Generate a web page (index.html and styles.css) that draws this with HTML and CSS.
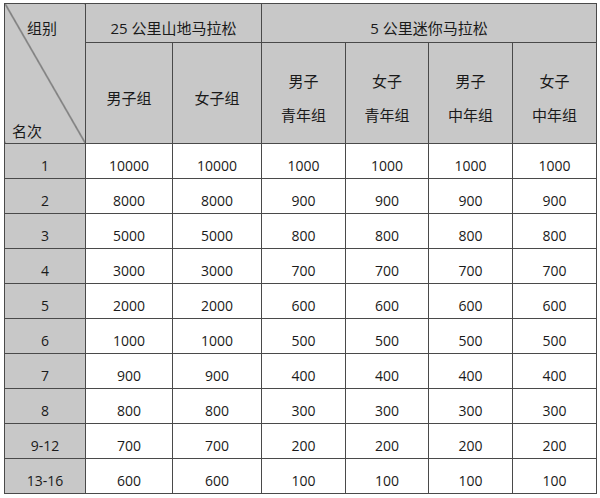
FILE: index.html
```html
<!DOCTYPE html>
<html lang="zh">
<head>
<meta charset="utf-8">
<link rel="stylesheet" href="styles.css">
</head>
<body>
<table class="prize">
  <colgroup>
    <col class="c0"><col class="c1"><col class="c2"><col class="c3"><col class="c4"><col class="c5"><col class="c6">
  </colgroup>
  <thead>
    <tr class="h1">
      <th class="corner" rowspan="2">
        <div class="corner-in">
          <span class="cg">组别</span>
          <span class="mc">名次</span>
        </div>
      </th>
      <th colspan="2">25 公里山地马拉松</th>
      <th colspan="4">5 公里迷你马拉松</th>
    </tr>
    <tr class="h2">
      <th>男子组</th>
      <th>女子组</th>
      <th>男子<br>青年组</th>
      <th>女子<br>青年组</th>
      <th>男子<br>中年组</th>
      <th>女子<br>中年组</th>
    </tr>
  </thead>
  <tbody>
    <tr><th>1</th><td>10000</td><td>10000</td><td>1000</td><td>1000</td><td>1000</td><td>1000</td></tr>
    <tr><th>2</th><td>8000</td><td>8000</td><td>900</td><td>900</td><td>900</td><td>900</td></tr>
    <tr><th>3</th><td>5000</td><td>5000</td><td>800</td><td>800</td><td>800</td><td>800</td></tr>
    <tr><th>4</th><td>3000</td><td>3000</td><td>700</td><td>700</td><td>700</td><td>700</td></tr>
    <tr><th>5</th><td>2000</td><td>2000</td><td>600</td><td>600</td><td>600</td><td>600</td></tr>
    <tr><th>6</th><td>1000</td><td>1000</td><td>500</td><td>500</td><td>500</td><td>500</td></tr>
    <tr><th>7</th><td>900</td><td>900</td><td>400</td><td>400</td><td>400</td><td>400</td></tr>
    <tr><th>8</th><td>800</td><td>800</td><td>300</td><td>300</td><td>300</td><td>300</td></tr>
    <tr><th>9-12</th><td>700</td><td>700</td><td>200</td><td>200</td><td>200</td><td>200</td></tr>
    <tr><th>13-16</th><td>600</td><td>600</td><td>100</td><td>100</td><td>100</td><td>100</td></tr>
  </tbody>
</table>
</body>
</html>
```

FILE: styles.css
```css
html, body {
  margin: 0;
  padding: 0;
  background: #ffffff;
}
body {
  padding: 3px 0 0 4px;
  font-family: "Open Sans", "Noto Sans CJK SC", sans-serif;
  font-size: 15px;
  color: #1a1a1a;
}
.prize {
  border-collapse: collapse;
  table-layout: fixed;
  width: 592px;
}
.c0 { width: 81px; }
.c1 { width: 87px; }
.c2 { width: 89px; }
.c3 { width: 84px; }
.c4 { width: 83px; }
.c5 { width: 84px; }
.c6 { width: 84px; }

.prize th, .prize td {
  border: 1px solid #4a4a4a;
  text-align: center;
  vertical-align: middle;
  padding: 10px 0 0 0;
  font-weight: normal;
  line-height: 20px;
}
.prize th {
  background: #c8c8c8;
}
.prize td {
  background: #ffffff;
}
.h1 th {
  height: 28px;
}
.h2 th {
  height: 89px;
  line-height: 34px;
}
.prize tbody th, .prize tbody td {
  height: 24px;
  font-size: 14px;
}
.prize th.corner {
  padding: 0;
  background: linear-gradient(to top right, #c8c8c8 calc(50% - 0.8px), #333333 50%, #c8c8c8 calc(50% + 0.8px));
}
.corner-in {
  display: flex;
  flex-direction: column;
  justify-content: space-between;
  height: 139px;
  box-sizing: border-box;
  padding: 14px 0 2px 0;
}
.cg {
  align-self: flex-start;
  margin-left: 22px;
  line-height: 20px;
}
.mc {
  align-self: flex-start;
  margin-left: 7px;
  line-height: 20px;
}
```
